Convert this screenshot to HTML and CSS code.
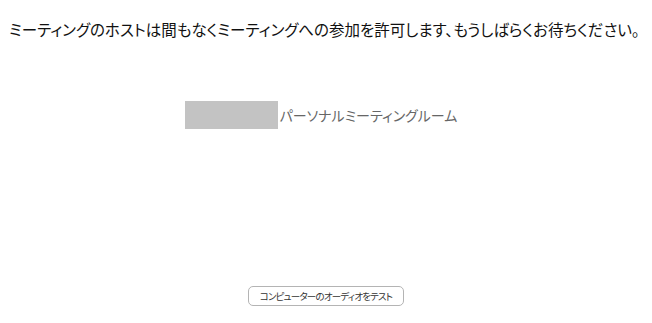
FILE: index.html
```html
<!DOCTYPE html>
<html lang="ja">
<head>
    <meta charset="UTF-8">
    <title>ミーティング待機室</title>
    <link rel="stylesheet" href="styles.css">
</head>
<body>
    <div class="waiting">
        <div class="message">ミーティングのホストは間もなくミーティングへの参加を許可します、もうしばらくお待ちください。</div>

        <div class="room">
            <div class="room-name-mask"></div>
            <span class="room-label">パーソナルミーティングルーム</span>
        </div>

        <div class="footer">
            <button class="test-btn">コンピューターのオーディオをテスト</button>
        </div>
    </div>
</body>
</html>
```

FILE: styles.css
```css
body {
    margin: 0;
    background: #ffffff;
    font-family: "Noto Sans CJK JP", "Noto Sans", sans-serif;
    font-feature-settings: "palt";
}

.waiting {
    height: 323px;
    display: flex;
    flex-direction: column;
}

.message {
    padding: 18px 0 0 9px;
    font-size: 15.5px;
    line-height: 22px;
    color: #111111;
    white-space: nowrap;
}

.room {
    margin-top: 61px;
    display: flex;
    align-items: center;
    justify-content: center;
    padding-right: 10px;
}

.room-name-mask {
    width: 93px;
    height: 28px;
    background: #c3c3c3;
}

.room-label {
    margin-left: 2px;
    font-size: 14px;
    color: #666666;
}

.footer {
    margin-top: auto;
    padding-bottom: 17px;
    display: flex;
    justify-content: center;
}

.test-btn {
    width: 156px;
    height: 20px;
    padding: 0;
    background: #ffffff;
    border: 1px solid #b4b4b4;
    border-radius: 5px;
    font-family: inherit;
    font-feature-settings: "palt";
    font-size: 9.5px;
    letter-spacing: -0.8px;
    color: #333333;
    white-space: nowrap;
}
```
